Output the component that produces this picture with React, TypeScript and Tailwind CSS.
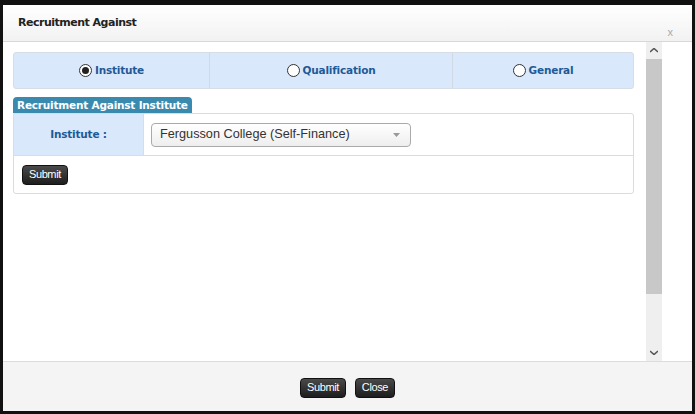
import React from "react";

const tabs = [
  { label: "Institute", checked: true, w: "w-[196px]" },
  { label: "Qualification", checked: false, w: "w-[243px]" },
  { label: "General", checked: false, w: "flex-1" },
];

function Radio({ checked }: { checked: boolean }) {
  return (
    <span className="w-[13px] h-[13px] rounded-full border border-[#333] bg-white flex items-center justify-center">
      {checked && <span className="w-[7px] h-[7px] rounded-full bg-[#222]" />}
    </span>
  );
}

function DarkButton({ children }: { children: React.ReactNode }) {
  return (
    <button className="h-[20px] px-[6px] rounded-[4px] border border-[#111] bg-gradient-to-b from-[#4a4a4a] to-[#1e1e1e] text-white text-[11px] leading-none font-['Liberation_Sans',sans-serif] tracking-[-0.4px]">
      {children}
    </button>
  );
}

export default function App() {
  return (
    <div className="w-[695px] h-[414px] bg-[#111] pt-[5px] px-[3px] pb-[3px] font-['DejaVu_Sans',sans-serif]">
      <div className="w-full h-full bg-white flex flex-col overflow-hidden">
        {/* TITLE */}
        <div className="h-[37px] shrink-0 bg-gradient-to-b from-white to-[#f2f2f2] border-b border-[#d8d8d8] relative flex items-center pl-[15px]">
          <span className="text-[11px] font-bold text-[#222] tracking-[-0.5px]">Recruitment Against</span>
          <span className="absolute right-[19px] top-[19px] text-[11px] text-[#aaa] font-['Liberation_Sans',sans-serif]">x</span>
        </div>

        {/* BODY */}
        <div className="flex-1 flex min-h-0">
          <div className="flex-1 pl-[10px] pr-[12px] pt-[10px]">
            <div className="h-[37px] flex bg-[#dae8fc] border border-[#d6dde6] rounded-[3px]">
              {tabs.map((t, i) => (
                <div
                  key={t.label}
                  className={`${t.w} flex items-center justify-center gap-[3px] ${i < 2 ? "border-r border-[#cfd8e3]" : ""}`}
                >
                  <Radio checked={t.checked} />
                  <span className="text-[10.5px] font-bold text-[#1e5a96] tracking-[-0.2px]">{t.label}</span>
                </div>
              ))}
            </div>

            <div className="mt-[8px] flex">
              <span className="h-[16px] px-[4px] bg-[#3a8ab0] rounded-t-[4px] text-white text-[10.5px] font-bold leading-[16px] tracking-[-0.2px]">
                Recruitment Against Institute
              </span>
            </div>
            <div className="border border-[#dcdcdc] rounded-b-[3px] rounded-tr-[3px]">
              <div className="h-[42px] flex border-b border-[#dcdcdc]">
                <div className="w-[130px] bg-[#dae8fc] border-r border-[#dcdcdc] flex items-center justify-center">
                  <span className="text-[10.5px] font-bold text-[#1e5a96] tracking-[-0.2px]">Institute :</span>
                </div>
                <div className="flex items-center pl-[7px]">
                  <div className="w-[260px] h-[24px] rounded-[4px] border border-[#aaa] bg-gradient-to-b from-white to-[#eeeeee] flex items-center justify-between pl-[8px] pr-[10px]">
                    <span className="text-[12.7px] text-[#333] font-['Liberation_Sans',sans-serif]">Fergusson College (Self-Finance)</span>
                    <svg width="7" height="4" viewBox="0 0 7 4">
                      <path d="M0 0h7L3.5 4z" fill="#999" />
                    </svg>
                  </div>
                </div>
              </div>
              <div className="h-[37px] flex items-center pl-[8px]">
                <DarkButton>Submit</DarkButton>
              </div>
            </div>
          </div>

          {/* SCROLLBAR */}
          <div className="w-[16px] bg-[#efefef] flex flex-col items-center mr-[30px]">
            <div className="h-[17px] flex items-center justify-center">
              <svg width="8" height="5" viewBox="0 0 8 5">
                <path d="M0 4L4 0.5L8 4" stroke="#555" strokeWidth="1.6" fill="none" />
              </svg>
            </div>
            <div className="w-full h-[235px] bg-[#c8c8c8]" />
            <div className="flex-1" />
            <div className="h-[17px] flex items-center justify-center">
              <svg width="8" height="5" viewBox="0 0 8 5">
                <path d="M0 1L4 4.5L8 1" stroke="#555" strokeWidth="1.6" fill="none" />
              </svg>
            </div>
          </div>
        </div>

        {/* FOOTER */}
        <div className="h-[50px] shrink-0 bg-[#f4f4f4] border-t border-[#dcdcdc] flex items-center justify-center gap-[9px] pt-[2px]">
          <DarkButton>Submit</DarkButton>
          <DarkButton>Close</DarkButton>
        </div>
      </div>
    </div>
  );
}
